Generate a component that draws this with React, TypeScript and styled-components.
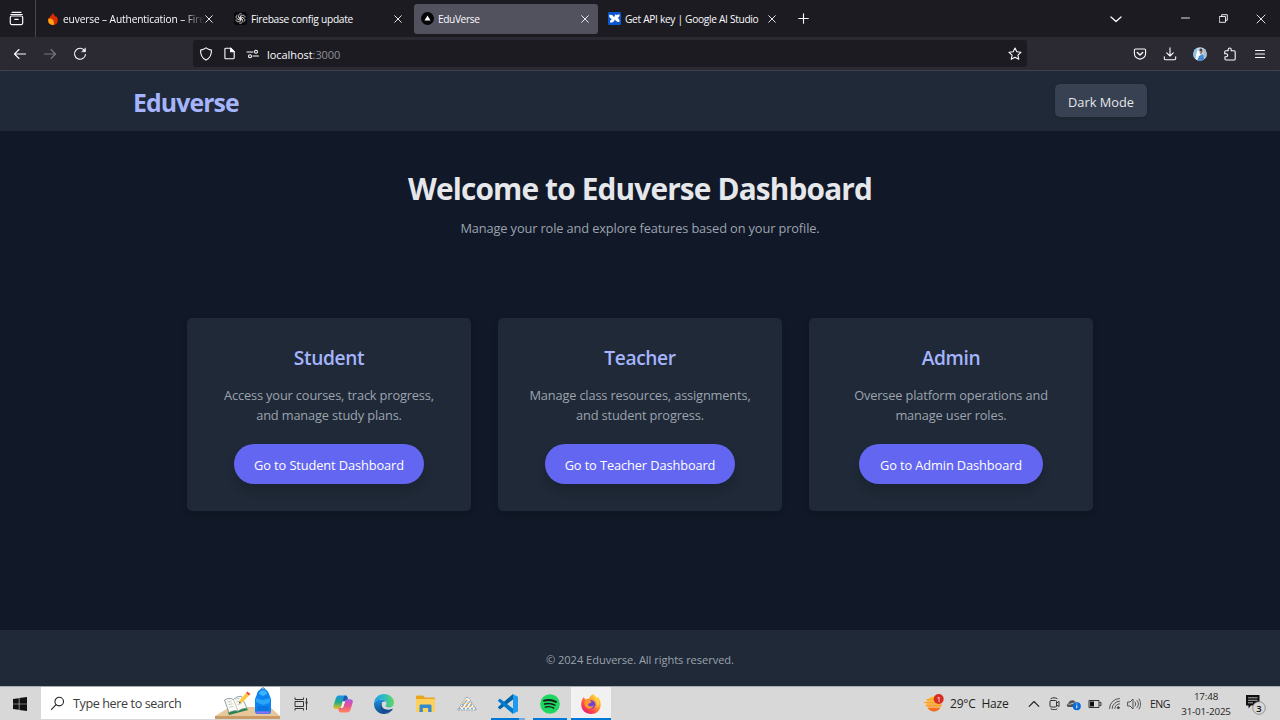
import React from "react";
import styled, { createGlobalStyle } from "styled-components";

const GlobalStyle = createGlobalStyle`
  *, *::before, *::after { box-sizing: border-box; }
  html, body { margin: 0; padding: 0; }
  body { background: #111827; overflow: hidden; font-family: "Segoe UI", "Open Sans", "Noto Sans", sans-serif; }
  button { font: inherit; border: 0; padding: 0; color: inherit; }
  h1, h2, p { margin: 0; }
  svg { display: block; flex: none; }
`;

const Screen = styled.div`
  width: 1280px;
  height: 720px;
  display: flex;
  flex-direction: column;
  overflow: hidden;
`;

/* ---------- browser chrome ---------- */
const TabStrip = styled.div`
  height: 37px;
  flex: none;
  display: flex;
  align-items: center;
  background: #1c1b22;
  color: #fbfbfe;
`;
const ViewCell = styled.div`
  width: 36px;
  height: 37px;
  flex: none;
  display: flex;
  align-items: center;
  padding-left: 9px;
  border-right: 1px solid #48474f;
`;
const Tab = styled.div<{ $active?: boolean; $end?: number }>`
  width: 184px;
  height: 30px;
  flex: none;
  display: flex;
  align-items: center;
  padding: 0 ${(p) => p.$end ?? 9}px 0 7px;
  border-radius: 3px;
  background: ${(p) => (p.$active ? "#52515e" : "transparent")};
`;
const Tabs = styled.div`
  display: flex;
  gap: 3px;
  padding-left: 4px;
`;
const TabTitle = styled.span<{ $ls: number; $fade?: boolean }>`
  flex: 1;
  min-width: 0;
  margin-left: 4px;
  white-space: nowrap;
  font-size: 10.2px;
  line-height: 16px;
  letter-spacing: ${(p) => p.$ls}px;
  ${(p) => p.$fade && "mask-image: linear-gradient(90deg, #000 84%, transparent 100%);"}
`;
const NewTab = styled.div`
  margin-left: 13px;
`;
const WindowControls = styled.div`
  margin-left: auto;
  display: flex;
  align-items: center;
  padding-right: 14px;
`;
const ControlGap = styled.span<{ $w: number }>`
  width: ${(p) => p.$w}px;
`;
const NavBar = styled.div`
  height: 34px;
  flex: none;
  display: flex;
  align-items: center;
  background: #2b2a33;
  border-bottom: 1px solid #42414d;
  color: #fbfbfe;
`;
const NavButtons = styled.div`
  width: 193px;
  display: flex;
  gap: 16px;
  padding-left: 13px;
`;
const AddressBar = styled.div`
  width: 834px;
  height: 27px;
  display: flex;
  align-items: center;
  padding: 0 5px 0 6px;
  border-radius: 3px;
  background: #1c1b22;
`;
const AddressIcons = styled.div`
  display: flex;
  gap: 10px;
`;
const Url = styled.span`
  flex: 1;
  padding: 2px 0 0 7px;
  font-size: 11px;
  line-height: 16px;
  letter-spacing: -0.06px;
`;
const Port = styled.span`
  color: #8f8f9a;
`;
const Extensions = styled.div`
  margin-left: auto;
  display: flex;
  gap: 16px;
  padding-right: 13px;
`;

/* ---------- page ---------- */
const Header = styled.header`
  height: 60px;
  flex: none;
  display: flex;
  align-items: center;
  justify-content: space-between;
  padding: 0 133px 1px;
  background: #1f2937;
  box-shadow: 0 3px 4px rgba(0, 0, 0, 0.12);
`;
const Brand = styled.h1`
  padding-top: 2px;
  font-size: 24.8px;
  line-height: 32px;
  font-weight: 700;
  letter-spacing: -0.9px;
  color: #a5b4fc;
`;
const ModeButton = styled.button`
  width: 92px;
  height: 33px;
  padding-top: 3px;
  border-radius: 5px;
  background: #374151;
  color: #e5e7eb;
  font-size: 12.8px;
  box-shadow: 0 1px 3px rgba(0, 0, 0, 0.14);
`;
const Main = styled.main`
  flex: 1;
  display: flex;
  flex-direction: column;
  align-items: center;
  padding-top: 38px;
  background: #111827;
`;
const Welcome = styled.h2`
  font-size: 29.8px;
  line-height: 40px;
  font-weight: 700;
  letter-spacing: -0.84px;
  white-space: nowrap;
  color: #e5e7eb;
`;
const Intro = styled.p`
  margin-top: 9px;
  font-size: 12.8px;
  line-height: 20px;
  letter-spacing: -0.12px;
  color: #9ca3af;
`;
const Cards = styled.section`
  display: grid;
  grid-template-columns: repeat(3, 284px);
  column-gap: 27px;
  margin-top: 80px;
`;
const Card = styled.article`
  height: 193px;
  display: flex;
  flex-direction: column;
  align-items: center;
  padding-top: 26px;
  border-radius: 5px;
  background: #1f2937;
  box-shadow: 0 3px 6px rgba(0, 0, 0, 0.13);
  text-align: center;
`;
const CardTitle = styled.h2`
  font-size: 19.2px;
  line-height: 28px;
  font-weight: 600;
  letter-spacing: -0.4px;
  color: #a5b4fc;
`;
const CardText = styled.p`
  margin-top: 13px;
  font-size: 12.8px;
  line-height: 20px;
  letter-spacing: -0.15px;
  white-space: pre-line;
  color: #9ca3af;
`;
const CardButton = styled.button<{ $width: number }>`
  width: ${(p) => p.$width}px;
  height: 40px;
  margin-top: 19px;
  padding-top: 2px;
  border-radius: 20px;
  background: #6366f1;
  color: #fff;
  font-size: 12.8px;
  letter-spacing: -0.1px;
  box-shadow: 0 7px 10px rgba(0, 0, 0, 0.13);
`;
const Footer = styled.footer`
  height: 56px;
  flex: none;
  display: flex;
  align-items: center;
  justify-content: center;
  padding-top: 2px;
  background: #1f2937;
  color: #9ca3af;
  font-size: 11.1px;
  letter-spacing: -0.05px;
`;

/* ---------- taskbar ---------- */
const Taskbar = styled.div`
  height: 34px;
  flex: none;
  display: flex;
  align-items: center;
  background: #d8d8d8;
  border-top: 1px solid #a9acb1;
  color: #1f1f1f;
`;
const Start = styled.div`
  width: 41px;
  padding-left: 13px;
`;
const Search = styled.div`
  width: 239px;
  height: 32px;
  display: flex;
  align-items: center;
  align-self: flex-start;
  padding-left: 9px;
  margin-right: 1px;
  background: #fff;
`;
const SearchLabel = styled.span`
  flex: 1;
  padding-left: 8px;
  font-size: 12.6px;
  letter-spacing: -0.4px;
  white-space: nowrap;
  color: #3c3c3c;
`;
const AppButton = styled.div<{ $state?: "open" | "focus" | "group" }>`
  width: 41.35px;
  height: 33px;
  display: flex;
  align-items: center;
  justify-content: center;
  background: ${(p) =>
    p.$state === "focus"
      ? "linear-gradient(#0078d7, #0078d7) 50% 100% / 40px 2px no-repeat, linear-gradient(#f1f1f1, #f1f1f1) 50% 0 / 40px 33px no-repeat"
      : p.$state === "open"
      ? "linear-gradient(#0078d7, #0078d7) 50% 100% / 34px 2px no-repeat"
      : p.$state === "group"
      ? "linear-gradient(90deg, #0078d7 28px, #78acd8 28px) 50% 100% / 34px 2px no-repeat"
      : "none"};
`;
const Tray = styled.div`
  margin-left: auto;
  display: flex;
  align-items: center;
`;
const Weather = styled.div`
  display: flex;
  align-items: center;
  gap: 6px;
  width: 100px;
  font-size: 12px;
  white-space: pre;
  letter-spacing: -0.2px;
`;
const TrayIcons = styled.div`
  display: grid;
  grid-template-columns: repeat(6, 20px);
  align-items: center;
  justify-items: center;
`;
const Language = styled.span`
  width: 28px;
  padding-left: 6px;
  font-size: 10.6px;
  letter-spacing: -0.6px;
`;
const Clock = styled.div`
  width: 52px;
  margin-left: 8px;
  display: flex;
  flex-direction: column;
  align-items: center;
  font-size: 9.8px;
  line-height: 15px;
  letter-spacing: -0.15px;
  white-space: nowrap;
`;
const Notices = styled.div`
  width: 48px;
  padding-left: 14px;
`;

/* ---------- icons ---------- */
type IconProps = { children: React.ReactNode; size?: number; color?: string; w?: number };
const Line = ({ children, size = 14, color = "currentColor", w = 1.1 }: IconProps) => (
  <svg width={size} height={size} viewBox={`0 0 ${size} ${size}`} fill="none" stroke={color} strokeWidth={w} strokeLinecap="round" strokeLinejoin="round">
    {children}
  </svg>
);

const Close = () => (
  <Line size={8} w={0.9}><path d="M.7 .7l6.600 6.600M7.300 .7L.7 7.300" /></Line>
);

const FlameIcon = () => (
  <svg width="12" height="12" viewBox="0 0 12 12">
    <path d="M5.8 0C7 1.5 7.8 2.7 8.2 3.7L9 3c1.300 1.600 2 3.100 1.800 4.900C10.500 10.500 8.700 12 6 12s-4.700-1.700-4.800-4.200C1.200 6 2.300 4.600 3.500 3.300 4.600 2.100 5.400 1.300 5.800 0z" fill="#dd2c00" />
    <path d="M1.600 5.500c2-.3 4 .6 4.800 2.300.6 1.400.7 2.800.3 4.200C3.500 12.200 1.300 10.500 1.200 7.800c0-.8.100-1.600.4-2.300z" fill="#ffa712" />
  </svg>
);
const ChatIcon = () => (
  <svg width="13" height="13" viewBox="0 0 13 13" fill="none" stroke="#e8e8e8" strokeWidth=".75">
    <rect width="13" height="13" rx="2.500" fill="#09090b" stroke="none" />
    {[0, 60, 120, 180, 240, 300].map((a) => (
      <path key={a} transform={`rotate(${a} 6.500 6.500)`} d="M4.700 5.500V3.400a1.900 1.900 0 0 1 3.200-1.200M4.700 5.500l2 1.100 2.600-1.500" />
    ))}
  </svg>
);
const VercelIcon = () => (
  <svg width="13" height="13" viewBox="0 0 13 13"><circle cx="6.500" cy="6.500" r="6.500" fill="#050507" /><path d="M6.500 3.400l3 5h-6z" fill="#fff" /></svg>
);
const StudioIcon = () => (
  <svg width="13" height="13" viewBox="0 0 13 13">
    <rect width="13" height="13" rx="1.300" fill="#0b57d0" />
    <path d="M1 3.200c2-.9 3.800 0 5 2C6.800 3.200 8.800 2.200 11.600 2.500c.5 1.600-.6 2.800-2.200 3.600 1.700.6 2.300 1.800 2.100 3.600-1.700.7-3.400-.3-4.600-2.300C6.300 9.600 4.700 10.700 2 10.500c-.2-1.400.5-2.500 2-3.400C2.200 6.600 1.100 5.100 1 3.200z" fill="#fff" />
    <circle cx="7.500" cy="3.300" r=".8" fill="#fff" />
  </svg>
);
const Avatar = () => (
  <svg width="14" height="14" viewBox="0 0 14 14">
    <defs><clipPath id="avatar"><circle cx="7" cy="7" r="6.800" /></clipPath></defs>
    <g clipPath="url(#avatar)">
      <path d="M0 0h14v14H0z" fill="#c5dcef" /><path d="M0 1h3.500l1 5-2 6H0z" fill="#8fc0ea" />
      <path d="M10 0h4v10h-3z" fill="#a8bccb" /><path d="M4 4h2.500l1 5-3 5H2z" fill="#fff" />
      <path d="M6 9l4-2 2 7H4z" fill="#4389d3" /><path d="M6.500 2.200C7 1 9.200 1 9.500 3L9 6 7 7z" fill="#4a3d3d" /><path d="M7 4l1.600.4-.5 2.500-1.100-.6z" fill="#cb9270" />
    </g>
  </svg>
);

const StartIcon = () => (
  <svg width="14" height="14" viewBox="0 0 14 14" fill="#111"><path d="M0 2l5.800-.8v5.500H0zM6.400 1.100L14 0v6.700H6.400zM0 7.300h5.800v5.500L0 12zM6.400 7.300H14V14l-7.600-1.100z" /></svg>
);
const SearchArt = () => (
  <svg width="65" height="32" viewBox="0 0 65 32">
    <path d="M0 29l15-9h40l10 9z" fill="#e8c79a" /><path d="M0 29h65v3H0z" fill="#c99b66" />
    <path d="M13 25l18-5 2 3-19 5z" fill="#24824a" />
    <path d="M9.500 13c3-2 6-2 9-.5 2-2.200 4.500-3.200 8-3.200l5.500 12c-4 0-6.500 1.200-9 2.800-3-.8-6-.2-9 1.600z" fill="#fbfaf2" stroke="#748b96" strokeWidth=".8" />
    <path d="M18.500 12.700l4.500 11M12.500 15l4-.8m-3 3.400l4-.8m-3 3.400l4-.8m2-7l4-1.200m-3 3.800l4-1.200m-3 3.800l4-1.200" stroke="#a9b4b4" strokeWidth=".7" />
    <path d="M24 16.500l1.200-3.800L31 6l3 2.600-6.500 6.600z" fill="#ffc83d" /><path d="M31 6l1.300-1.400 3.200 2.400L34 8.600z" fill="#ef4938" /><path d="M24 16.500l.6-2 1.300 1.200z" fill="#444" />
    <path d="M42 7c.5-3.500 3-5 6-5s5.500 2 6 5l2 5v12c0 2.500-1 3-3 3h-10c-2 0-3-1-3-3V12z" fill="#0c83ee" />
    <path d="M44 7c0-5 8-5 8 0l-4 2z" fill="#37b6ff" /><path d="M40.500 11l7 2 8-2-1 5-6.500 2-7-3z" fill="#29a5fa" />
    <path d="M42 19h12v5H42z" fill="#0a74e0" /><path d="M41 24.500h14l-1 2H42z" fill="#9b6af2" /><path d="M46 2.500C46 .5 50 .5 50 2.500" stroke="#0759ad" fill="none" />
  </svg>
);
const TaskViewIcon = () => (
  <svg width="15" height="14" viewBox="0 0 15 14" fill="none" stroke="#333"><path d="M1 .5v2h8.500v-2M1 13.500v-2h8.500v2M1 4.500h8.500v5H1zM12.500 1v12" /><path d="M11.500 4.500h2v2h-2z" fill="#333" stroke="none" /></svg>
);
const CopilotIcon = () => (
  <svg width="20" height="20" viewBox="0 0 20 20">
    <defs>
      <linearGradient id="cpa" x2="0" y2="1"><stop stopColor="#1693ec" /><stop offset=".5" stopColor="#22ab87" /><stop offset="1" stopColor="#f6be1c" /></linearGradient>
      <linearGradient id="cpb" x2="0" y2="1"><stop stopColor="#ac58e8" /><stop offset=".5" stopColor="#e8538f" /><stop offset="1" stopColor="#ff865c" /></linearGradient>
    </defs>
    <path d="M6 1.500h6.500c1.500 0 2 1.200 2.300 2.600L15 6h-3.500c-1 0-1.500.7-1.900 2L8 13c-.5 1.500-1 2-2.300 2H3C.8 15 0 13.500.6 11.400l1.800-6C3.200 3 4.200 1.500 6 1.500z" fill="url(#cpa)" />
    <path d="M14.200 18.500H7.800c-1.500 0-2-1-2.300-2.400L5.200 14H8.500c1.200 0 1.700-.6 2.100-2l1.400-4.700c.5-1.500 1.200-2.100 2.500-2.100H17c2.400 0 3.200 1.400 2.600 3.600l-1.800 6c-.8 2.700-1.800 3.700-3.600 3.700z" fill="url(#cpb)" />
    <path d="M12 1.500c1.800 0 2.300 1.500 2.700 3.700-1.400 0-2.300.7-2.700 2.100H9.800C10.500 4 11 1.500 12 1.500z" fill="#2354b8" />
    <path d="M9.800 7.500H12L10.500 12c-.4 1.400-1 2-2.300 2z" fill="#f2f2f2" />
  </svg>
);
const EdgeIcon = () => (
  <svg width="20" height="20" viewBox="0 0 20 20">
    <defs>
      <linearGradient id="eda"><stop stopColor="#1b9de2" /><stop offset=".5" stopColor="#2dbbc6" /><stop offset="1" stopColor="#65d65b" /></linearGradient>
      <linearGradient id="edb" x2="0" y2="1"><stop stopColor="#1b8fdd" /><stop offset="1" stopColor="#114a8c" /></linearGradient>
    </defs>
    <path d="M0 9.500C.4 4 4.700 0 10 0c6 0 10 4.200 10 8.500 0 3-2.200 5-5 5-2.200 0-3.500-.8-3.500-1.500 0-.6 1-.8 1-2.500 0-2.200-2.500-4-5.500-4-3 0-5.500 1.500-7 4z" fill="url(#eda)" />
    <path d="M0 9.500C1.500 6.800 4 5.500 7 5.500c2 0 3.800.8 4.800 2C8.500 7 6.500 9 6.500 12c0 3.500 3 6.500 7 6.500 1 0 2-.2 3-.7-1.700 1.400-4 2.200-6.500 2.200C4.400 20 0 15.500 0 10z" fill="url(#edb)" />
    <path d="M8 8.700C6.600 9.600 6 11 6.200 13c.4 3.700 3.500 6.300 7.400 5.700 2.200-.4 4.100-1.800 5.100-3.500.3-.4-.1-.7-.5-.5-4.800 2.200-10.200.3-10.500-3.500-.1-1 .1-1.800.3-2.500z" fill="#164b91" />
  </svg>
);
const FolderIcon = () => (
  <svg width="19" height="18" viewBox="0 0 19 18"><path d="M0 1.500C0 .7.500.5 1 .5h6L9 2.500h9c.7 0 1 .3 1 1v12H0z" fill="#e9a522" /><path d="M0 4h19v12c0 .7-.3 1-1 1H1c-.7 0-1-.3-1-1z" fill="#ffd15c" /><path d="M3.500 17v-6c0-1 .5-1.500 1.500-1.500h9c1 0 1.500.5 1.500 1.500v6h-3.300v-4H6.800v4z" fill="#318bd0" /></svg>
);
const TentIcon = () => (
  <svg width="20" height="14" viewBox="0 0 20 14">
    <path d="M9 .5h2.500L17 9l2.500 4H.5L3.500 8.500z" fill="#f7f7f7" stroke="#8a969e" strokeWidth=".9" strokeDasharray="1.800 .8" />
    <path d="M8.500 3.500h4M6 6.500h9M4 9.500h13" stroke="#f3a33b" strokeWidth="1.500" strokeDasharray="2 2" /><path d="M7.500 5h6M5 8h11M2 11.500h17" stroke="#6da7d2" strokeWidth="1.500" strokeDasharray="2 2" />
  </svg>
);
const CodeIcon = () => (
  <svg width="20" height="20" viewBox="0 0 20 20"><path d="M15 0v5.500L2.500 15c-.4.300-.7.300-1 0l-1.200-1c-.4-.4-.4-.8 0-1.200z" fill="#0065a9" /><path d="M15 20v-5.500L2.500 5c-.4-.3-.7-.3-1 0L.3 6c-.4.400-.4.800 0 1.200z" fill="#007acc" /><path d="M14.500 0L19.300 2.200c.5.300.7.600.7 1.100v13.400c0 .5-.2.800-.7 1.100L14.500 20c.4-.2.500-.5.500-1V1c0-.5-.1-.8-.5-1z" fill="#1f9cf0" /></svg>
);
const MusicIcon = () => (
  <svg width="20" height="20" viewBox="0 0 20 20"><circle cx="10" cy="10" r="9.800" fill="#1ed760" /><g fill="none" stroke="#151b17" strokeLinecap="round"><path d="M4 6.700c4.300-1.200 8.300-.8 12 1.200" strokeWidth="1.900" /><path d="M4.600 10c3.700-1 7.200-.6 10.300 1.200" strokeWidth="1.500" /><path d="M5.200 13.100c3-.8 6-.5 8.600 1" strokeWidth="1.300" /></g></svg>
);
const FoxIcon = () => (
  <svg width="20" height="20" viewBox="0 0 20 20">
    <defs><linearGradient id="fox" x1="1" y1="0" x2=".2" y2="1"><stop stopColor="#fff04a" /><stop offset=".45" stopColor="#ff9930" /><stop offset=".75" stopColor="#ff4347" /><stop offset="1" stopColor="#e31587" /></linearGradient></defs>
    <path d="M2.500 3l2 2.500C5.500 4.800 6.500 4.500 8 4.700 8.500 2.500 10.500.8 12.700 0c0 2 2 3 3.800 4.500.2-.5.200-1.200 0-2 2 2.200 3.500 5.500 3.200 9C19.300 16.500 15.300 20 10 20S.5 16.200.3 11C.1 8.200 1 5.500 2.500 3z" fill="url(#fox)" />
    <circle cx="10.200" cy="10.500" r="4.200" fill="#7542d8" /><path d="M4.500 6.500c2-.8 4.200-.4 6 1.500-1 1.300-3 1-3.400 2.200-.3 1.500 2.500 3.500 5.500 1.300-.5 3-5.500 4.500-8 1.500C3.200 11 3 8 4.500 6.500z" fill="#ff9a28" /><path d="M13 1c-.8 2.500.5 4 2 6 1.500 2 1.300 5 0 7 3.500-2 3.800-6.500 2-9.500z" fill="#ffcf3e" />
  </svg>
);
const WeatherIcon = () => (
  <svg width="20" height="19" viewBox="0 0 20 19">
    <defs><linearGradient id="sun" x2="0" y2="1"><stop stopColor="#fcc419" /><stop offset="1" stopColor="#f4621f" /></linearGradient></defs>
    <circle cx="10" cy="10" r="7.500" fill="url(#sun)" />
    <path d="M1 7h12M0 10h17M1 13h16" stroke="#f5e6cf" strokeWidth=".8" /><path d="M3 5.700h9M.7 8.500h15M2 11.500h15" stroke="#f6a623" strokeWidth="1.600" strokeLinecap="round" />
    <circle cx="14.700" cy="5" r="5" fill="#d92b20" /><text x="14.700" y="7.800" textAnchor="middle" fontFamily="Open Sans" fontSize="7.500" fill="#fff">1</text>
  </svg>
);
const NoticeIcon = () => (
  <svg width="22" height="22" viewBox="0 0 22 22">
    <path d="M0 2h13.500v10.500H5l-2.500 3v-3H0z" fill="#101010" /><path d="M2 4.800h9.500M2 7.300h9.500M2 9.800h5" stroke="#d8d8d8" strokeWidth=".8" />
    <circle cx="13" cy="15" r="6.300" fill="#d8d8d8" stroke="#7f7f7f" strokeWidth=".8" /><text x="13" y="18.500" textAnchor="middle" fontFamily="Open Sans" fontSize="9.500" fontWeight="600" fill="#111">3</text>
  </svg>
);

const cards = [
  { title: "Student", text: "Access your courses, track progress,\nand manage study plans.", width: 190 },
  { title: "Teacher", text: "Manage class resources, assignments,\nand student progress.", width: 190 },
  { title: "Admin", text: "Oversee platform operations and\nmanage user roles.", width: 184 },
];

export default function App() {
  return (
    <Screen>
      <GlobalStyle />
      <TabStrip>
        <ViewCell>
          <Line size={15} w={1.200}><path d="M3 1.300h9M1.800 3.500h11.400" /><rect x="1.300" y="5" width="12.400" height="8.600" rx="1.500" /><path d="M5.800 8.300h3.400" /></Line>
        </ViewCell>
        <Tabs>
          <Tab $end={11}><FlameIcon /><TabTitle $ls={-0.13} $fade>euverse – Authentication – Fireb</TabTitle><Close /></Tab>
          <Tab><ChatIcon /><TabTitle $ls={-0.27}>Firebase config update</TabTitle><Close /></Tab>
          <Tab $active><VercelIcon /><TabTitle $ls={-0.4}>EduVerse</TabTitle><Close /></Tab>
          <Tab><StudioIcon /><TabTitle $ls={-0.32}>Get API key | Google AI Studio</TabTitle><Close /></Tab>
        </Tabs>
        <NewTab><Line size={11}><path d="M5.500 .7v9.600M.7 5.500h9.600" /></Line></NewTab>
        <WindowControls>
          <Line size={12} w={1.300}><path d="M1 4l5 4.500L11 4" /></Line>
          <ControlGap $w={59} />
          <Line size={9} w={0.9}><path d="M.5 4h8" /></Line>
          <ControlGap $w={29} />
          <Line size={9} w={0.9}><path d="M.7 2.500h5.800v5.800H.7zM2.700 2.500V.7h5.600v5.600H6.500" /></Line>
          <ControlGap $w={28} />
          <Line size={10} w={0.9}><path d="M1 1l8 8M9 1L1 9" /></Line>
        </WindowControls>
      </TabStrip>

      <NavBar>
        <NavButtons>
          <Line><path d="M12.500 7H1.500M6 2.500L1.500 7 6 11.500" /></Line>
          <Line color="#77767e"><path d="M1.500 7h11M8 2.500L12.500 7 8 11.500" /></Line>
          <Line><path d="M11.800 4A5.500 5.500 0 1 0 12.500 7.500" /><path d="M12.500 1.200v3.600H8.900z" fill="currentColor" strokeWidth=".5" /></Line>
        </NavButtons>
        <AddressBar>
          <AddressIcons>
            <Line><path d="M7 .9c1.700 1.200 3.300 1.800 5.400 2.200.3 4.400-1.400 8-5.400 10C3 11.100 1.300 7.500 1.600 3.100 3.700 2.700 5.300 2.100 7 .9z" /></Line>
            <Line size={13}><path d="M3 1.200h4.700l3.500 3.500v6c0 .7-.4 1.100-1.100 1.100H3c-.7 0-1.100-.4-1.100-1.100V2.300c0-.7.400-1.100 1.100-1.100z" /><path d="M7.600 1.200v3.600h3.600z" fill="currentColor" /></Line>
            <Line><path d="M1 5h6M7 9h5.500" /><circle cx="10" cy="4.800" r="1.500" /><circle cx="4" cy="9.200" r="1.500" /></Line>
          </AddressIcons>
          <Url>localhost<Port>:3000</Port></Url>
          <Line><path d="M7 1l1.800 3.800 4.200.5-3.100 2.800.9 4.200L7 10.200l-3.800 2.100.9-4.200L1 5.300l4.200-.5z" /></Line>
        </AddressBar>
        <Extensions>
          <Line><path d="M2.500 2h9c.7 0 1.100.4 1.100 1.100v3.400a5.600 5.600 0 0 1-11.200 0V3.100C1.400 2.400 1.800 2 2.500 2z" /><path d="M4.300 5.500L7 8l2.700-2.500" strokeWidth="1.400" /></Line>
          <Line><path d="M7 .8v8M3.700 5.800L7 9l3.300-3.200M1.300 9.800v1.700c0 .8.400 1.200 1.200 1.200h9c.8 0 1.200-.4 1.200-1.200V9.800" /></Line>
          <Avatar />
          <Line><path d="M5.200 3.700V2.500c0-2 3-2 3 0v1.200H11c.8 0 1.200.4 1.200 1.200v7c0 .7-.4 1.100-1.200 1.100H3.200C2.400 13 2 12.600 2 11.900V9.800h1.200c2 0 2-3 0-3H1.700V4.900c0-.8.400-1.200 1.200-1.200z" /></Line>
          <Line><path d="M2.500 3.500h9M2.500 7h9M2.500 10.500h9" /></Line>
        </Extensions>
      </NavBar>

      <Header>
        <Brand>Eduverse</Brand>
        <ModeButton>Dark Mode</ModeButton>
      </Header>
      <Main>
        <Welcome>Welcome to Eduverse Dashboard</Welcome>
        <Intro>Manage your role and explore features based on your profile.</Intro>
        <Cards>
          {cards.map((c) => (
            <Card key={c.title}>
              <CardTitle>{c.title}</CardTitle>
              <CardText>{c.text}</CardText>
              <CardButton $width={c.width}>Go to {c.title} Dashboard</CardButton>
            </Card>
          ))}
        </Cards>
      </Main>
      <Footer>© 2024 Eduverse. All rights reserved.</Footer>

      <Taskbar>
        <Start><StartIcon /></Start>
        <Search>
          <Line size={15} color="#222"><circle cx="9.200" cy="5.600" r="4.300" /><path d="M6.100 8.700L1.500 13.300" /></Line>
          <SearchLabel>Type here to search</SearchLabel>
          <SearchArt />
        </Search>
        <AppButton><TaskViewIcon /></AppButton>
        <AppButton><CopilotIcon /></AppButton>
        <AppButton><EdgeIcon /></AppButton>
        <AppButton><FolderIcon /></AppButton>
        <AppButton><TentIcon /></AppButton>
        <AppButton $state="group"><CodeIcon /></AppButton>
        <AppButton $state="open"><MusicIcon /></AppButton>
        <AppButton $state="focus"><FoxIcon /></AppButton>
        <Tray>
          <Weather><WeatherIcon />{"29°C  Haze"}</Weather>
          <TrayIcons>
            <Line size={12} color="#222"><path d="M1.200 8.300L6 3.500l4.800 4.800" /></Line>
            <Line size={13} color="#333" w={1}><rect x="2" y="3.500" width="6.500" height="6.500" rx="1" /><path d="M8.500 6l2.500-1.500v5L8.500 8M3 1.500c2-1 4-1 6 0M3 12c2 1 4 1 6 0" /></Line>
            <svg width="16" height="14" viewBox="0 0 16 14"><path d="M3 10C.5 10 0 7.500 2.300 6.500 3 3.500 7.500 2 9.500 5c2 0 3 1 3 2.500V10z" fill="#555" /><path d="M2.500 7.500l8-2" stroke="#bbb" /><circle cx="10.800" cy="9.200" r="4" fill="#0869d9" /><path d="M10.800 8.300v3M10.800 6.500v.9" stroke="#fff" /></svg>
            <svg width="15" height="10" viewBox="0 0 15 10"><path d="M2 1.500h10v7H2z" fill="none" stroke="#333" /><path d="M3 2.500h4v5H3z" fill="#111" /><path d="M12.500 3.500H14v3h-1.500" fill="none" stroke="#333" /></svg>
            <Line size={13} color="#444" w={0.9}><path d="M1.500 11.500A10 10 0 0 1 11.500 1.500M4.200 11.500a7.300 7.300 0 0 1 7.300-7.300M6.800 11.500a4.700 4.700 0 0 1 4.700-4.700" /><circle cx="10.300" cy="10.700" r="1" fill="#333" /></Line>
            <Line size={14} color="#444" w={0.9}><path d="M1 5h2l3-3v10L3 9H1zM8 5c1 1.300 1 2.700 0 4M10 3.500c2 2.200 2 4.800 0 7M12 2c2.200 3 2.200 7 0 10" /></Line>
          </TrayIcons>
          <Language>ENG</Language>
          <Clock><span>17:48</span><span>31-01-2025</span></Clock>
          <Notices><NoticeIcon /></Notices>
        </Tray>
      </Taskbar>
    </Screen>
  );
}
